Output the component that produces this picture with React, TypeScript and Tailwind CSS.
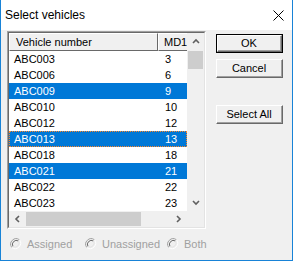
import React from 'react';

const rows = [
  { name: 'ABC003', md: '3' },
  { name: 'ABC006', md: '6' },
  { name: 'ABC009', md: '9', selected: true },
  { name: 'ABC010', md: '10' },
  { name: 'ABC012', md: '12' },
  { name: 'ABC013', md: '13', selected: true, focused: true },
  { name: 'ABC018', md: '18' },
  { name: 'ABC021', md: '21', selected: true },
  { name: 'ABC022', md: '22' },
  { name: 'ABC023', md: '23' },
];

function Chevron({ dir }: { dir: 'up' | 'down' | 'left' | 'right' }) {
  const pts = {
    up: '1,5 4,2 7,5',
    down: '1,2 4,5 7,2',
    left: '5,1 2,4 5,7',
    right: '2,1 5,4 2,7',
  }[dir];
  return (
    <svg width="8" height="8" viewBox="0 0 8 8">
      <polyline points={pts} fill="none" stroke="#606060" strokeWidth="1.6" />
    </svg>
  );
}

function Radio({ label, width }: { label: string; width?: string }) {
  return (
    <div className={`flex items-center gap-[5px] h-[12px] shrink-0 ${width ?? ''}`}>
      <svg width="12" height="12" viewBox="0 0 12 12">
        <circle cx="6" cy="6" r="5" fill="#f0f0f0" />
        <path d="M1.8 9.5 A5.5 5.5 0 0 1 9.5 1.8" fill="none" stroke="#a0a0a0" strokeWidth="1" />
        <path d="M9.5 1.8 A5.5 5.5 0 0 1 1.8 9.5" fill="none" stroke="#ffffff" strokeWidth="1" />
        <path d="M3 8.5 A4 4 0 0 1 8.5 3" fill="none" stroke="#696969" strokeWidth="1" />
        <path d="M8.5 3 A4 4 0 0 1 3 8.5" fill="none" stroke="#e3e3e3" strokeWidth="1" />
      </svg>
      <span className="text-[#a0a0a0] leading-none whitespace-nowrap">{label}</span>
    </div>
  );
}

function Button({ label, primary }: { label: string; primary?: boolean }) {
  return (
    <div
      className={`h-[19px] w-[67px] flex ${primary ? 'border border-black' : ''}`}
    >
      <div className="flex-1 flex border-t border-l border-white border-r border-b border-r-[#696969] border-b-[#696969] bg-[#f0f0f0]">
        <div className="flex-1 flex items-center justify-center border-r border-b border-[#a0a0a0] text-black">
          {label}
        </div>
      </div>
    </div>
  );
}

export default function App() {
  return (
    <div className="w-[293px] h-[261px] bg-[#f0f0f0] border-l border-r border-b border-[#1883d7] flex flex-col font-['Liberation_Sans',Arial,sans-serif] text-[11px] select-none">
      {/* Title bar */}
      <div className="h-[30px] bg-white flex items-center justify-between pl-[4px] pr-[8px]">
        <span className="text-[12px] text-black">Select vehicles</span>
        <svg width="11" height="11" viewBox="0 0 11 11">
          <path d="M0.5 0.5 L10.5 10.5 M10.5 0.5 L0.5 10.5" stroke="#000" strokeWidth="1" />
        </svg>
      </div>

      <div className="flex-1 flex pt-px pl-[6px]">
        <div className="flex flex-col w-[199px]">
          {/* List frame */}
          <div className="h-[198px] flex flex-col border-t border-l border-[#a0a0a0] border-r border-b border-r-white border-b-white">
            <div className="flex-1 flex flex-col border-t border-l border-[#696969] border-r border-b border-r-[#e3e3e3] border-b-[#e3e3e3] bg-white">
              <div className="flex flex-1 min-h-0">
                {/* Columns */}
                <div className="w-[178px] flex flex-col overflow-hidden">
                  <div className="h-[18px] flex bg-[#f0f0f0] shrink-0">
                    <div className="w-[149px] shrink-0 flex items-center pl-[6px] border-t border-l border-white border-r border-b border-r-[#696969] border-b-[#696969]">
                      Vehicle number
                    </div>
                    <div className="w-[40px] shrink-0 flex items-center pl-[5px] border-t border-l border-white border-b border-b-[#696969] whitespace-nowrap">
                      MD1
                    </div>
                  </div>
                  {rows.map(r => (
                    <div
                      key={r.name}
                      className={`relative h-4 flex items-center shrink-0 ${r.selected ? 'bg-[#0078d7] text-white' : 'text-black'}`}
                    >
                      <div className="w-[149px] shrink-0 pl-[5px]">{r.name}</div>
                      <div className="pl-[7px]">{r.md}</div>
                      {r.focused && (
                        <div className="absolute inset-0 outline-1 outline-dotted outline-[#ff8728] -outline-offset-1" />
                      )}
                    </div>
                  ))}
                </div>
                {/* Vertical scrollbar */}
                <div className="w-[17px] bg-[#f0f0f0] flex flex-col items-center">
                  <div className="h-[18px] flex items-center justify-center"><Chevron dir="up" /></div>
                  <div className="h-[18px] w-[15px] bg-[#cdcdcd]" />
                  <div className="flex-1" />
                  <div className="h-[17px] flex items-center justify-center"><Chevron dir="down" /></div>
                </div>
              </div>
              {/* Horizontal scrollbar */}
              <div className="h-[16px] flex bg-[#f0f0f0] shrink-0">
                <div className="w-[17px] flex items-center justify-center"><Chevron dir="left" /></div>
                <div className="w-[115px] my-px bg-[#cdcdcd]" />
                <div className="flex-1" />
                <div className="w-[17px] flex items-center justify-center"><Chevron dir="right" /></div>
                <div className="w-[17px]" />
              </div>
            </div>
          </div>

          {/* Radios */}
          <div className="mt-[9px] flex pl-[3px]">
            <Radio label="Assigned" width="w-[75px]" />
            <Radio label="Unassigned" width="w-[82px]" />
            <Radio label="Both" />
          </div>
        </div>

        <div className="ml-[10px] pt-[3px] flex flex-col">
          <Button label="OK" primary />
          <div className="mt-[6px]"><Button label="Cancel" /></div>
          <div className="mt-[27px]"><Button label="Select All" /></div>
        </div>
      </div>
    </div>
  );
}
